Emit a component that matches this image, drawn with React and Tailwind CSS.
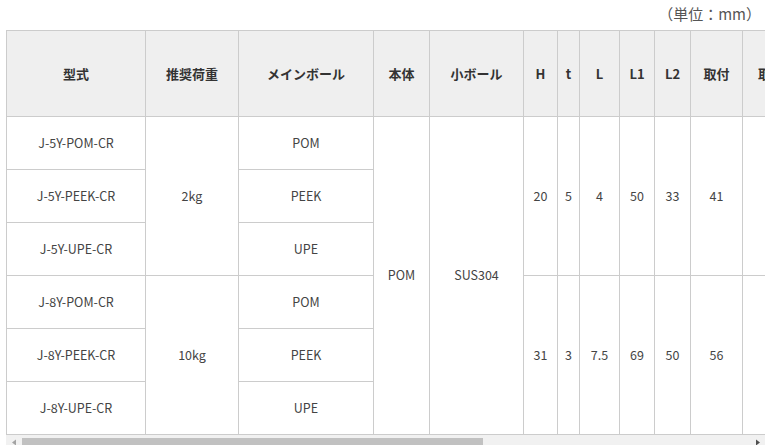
import React from "react";

const font = { fontFamily: '"Noto Sans CJK JP", "Noto Sans", sans-serif' };

const headers = ["型式", "推奨荷重", "メインボール", "本体", "小ボール", "H", "t", "L", "L1", "L2", "取付", "取付穴", "D", "d", "質量(g)", "許容荷重"];
const widths = [139, 93, 135, 56, 94, 34, 22, 40, 35, 36, 52, 70, 50, 50, 90, 204];

const groups = [
  {
    load: "2kg",
    dims: ["20", "5", "4", "50", "33", "41", "M4", "12", "6", "18", "20N"],
    rows: [
      ["J-5Y-POM-CR", "POM"],
      ["J-5Y-PEEK-CR", "PEEK"],
      ["J-5Y-UPE-CR", "UPE"],
    ],
  },
  {
    load: "10kg",
    dims: ["31", "3", "7.5", "69", "50", "56", "M6", "20", "10", "45", "100N"],
    rows: [
      ["J-8Y-POM-CR", "POM"],
      ["J-8Y-PEEK-CR", "PEEK"],
      ["J-8Y-UPE-CR", "UPE"],
    ],
  },
];

const td = "border border-[#cccccc] text-center align-middle text-[12.5px] text-[#444444] p-0 whitespace-nowrap";

export default function App() {
  return (
    <div className="bg-white w-[765px] min-h-[460px]" style={font}>
      <div className="h-[30px] text-right pr-[4px] pt-[3px] text-[15px] leading-[22px] text-[#555555]">
        （単位：mm）
      </div>
      <div className="ml-[6px]">
        <div className="overflow-hidden">
          <table className="table-fixed border-collapse w-[1200px]">
            <colgroup>
              {widths.map((w, i) => (
                <col key={i} style={{ width: w }} />
              ))}
            </colgroup>
            <thead>
              <tr>
                {headers.map((h) => (
                  <th
                    key={h}
                    className="h-[86px] border border-[#cccccc] bg-[#efefef] text-center align-middle text-[13px] font-bold text-[#333333] p-0 whitespace-nowrap"
                  >
                    {h}
                  </th>
                ))}
              </tr>
            </thead>
            <tbody>
              {groups.map((g, gi) =>
                g.rows.map((r, ri) => (
                  <tr key={`${gi}-${ri}`}>
                    <td className={`${td} h-[53px]`}>{r[0]}</td>
                    {ri === 0 && (
                      <td className={td} rowSpan={3}>
                        {g.load}
                      </td>
                    )}
                    <td className={td}>{r[1]}</td>
                    {gi === 0 && ri === 0 && (
                      <>
                        <td className={td} rowSpan={6}>
                          POM
                        </td>
                        <td className={td} rowSpan={6}>
                          SUS304
                        </td>
                      </>
                    )}
                    {ri === 0 &&
                      g.dims.map((d, di) => (
                        <td key={di} className={td} rowSpan={3}>
                          {d}
                        </td>
                      ))}
                  </tr>
                ))
              )}
            </tbody>
          </table>
        </div>
        <div className="flex h-[15px] bg-[#f1f1f1]">
          <div className="w-[15px] flex items-center justify-center">
            <svg width="6" height="7" viewBox="0 0 6 7">
              <path d="M5 0.5 L1 3.5 L5 6.5 Z" fill="#a3a3a3" />
            </svg>
          </div>
          <div className="flex-1 flex items-center">
            <div className="ml-[1px] w-[461px] h-[9px] bg-[#c1c1c1]" />
          </div>
          <div className="w-[15px] flex items-center justify-center">
            <svg width="6" height="7" viewBox="0 0 6 7">
              <path d="M1 0.5 L5 3.5 L1 6.5 Z" fill="#505050" />
            </svg>
          </div>
        </div>
      </div>
    </div>
  );
}
